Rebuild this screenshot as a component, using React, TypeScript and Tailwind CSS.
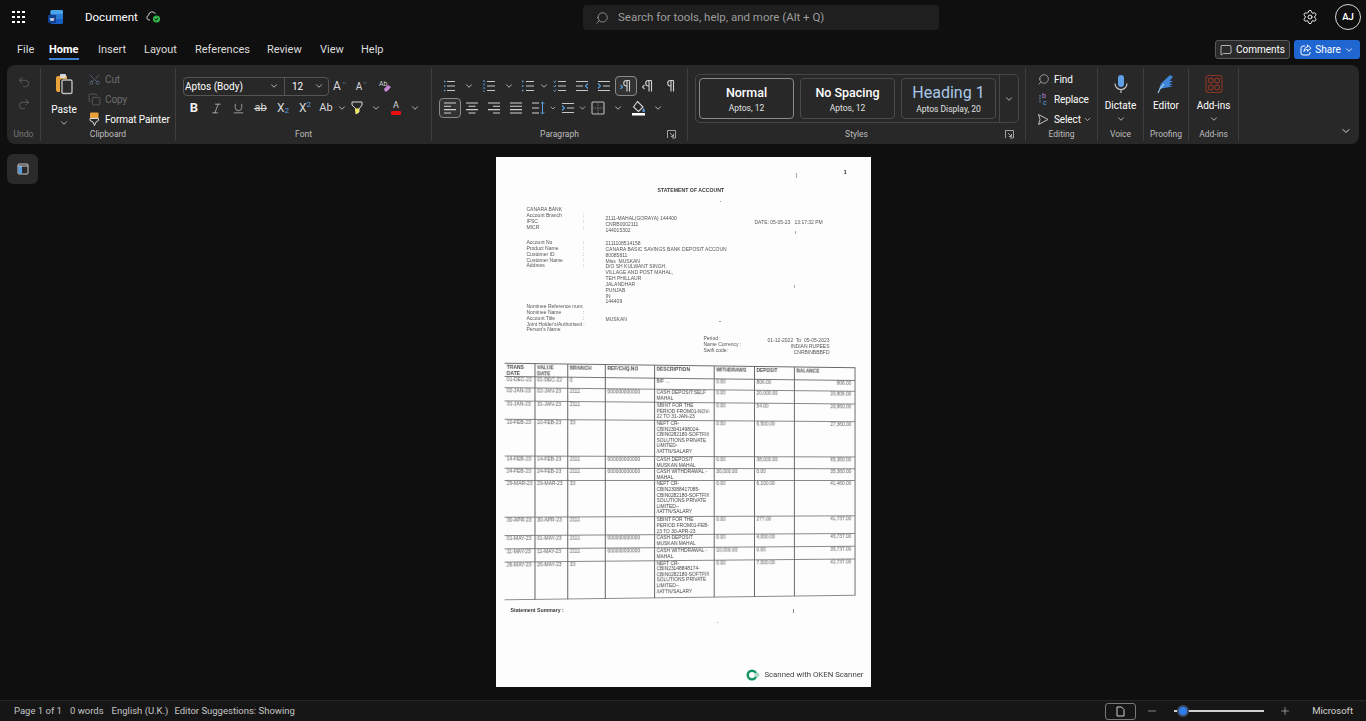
import React, { ReactNode } from 'react';
import {
  Undo2, Redo2, Scissors, Copy, Search, Settings, MessageSquare, ChevronDown, Italic,
  Underline, Plus, Minus,
} from 'lucide-react';

const Chev = ({ className = 'text-[#d0d0d0]' }: { className?: string }) => <ChevronDown size={10} strokeWidth={2} className={className} />;

// --- hand drawn ribbon icons ---
const ListIcon = ({ kind }: { kind: 'bullet' | 'number' | 'multi' | 'check' }) => (
  <svg width="16" height="16" viewBox="0 0 16 16" fill="none">
    {kind === 'number' && <path d="M3 2v12" stroke="#4f93d6" strokeWidth="1.2" strokeDasharray="2 1.5" />}
    {kind === 'bullet' && <path d="M3 3.5h1.4M3 8h1.4M3 12.5h1.4" stroke="#6aa5de" strokeWidth="1.5" />}
    {kind === 'multi' && <path d="M2 3.5h1.4M2 8h1.4M2 12.5h1.4" stroke="#6aa5de" strokeWidth="1.5" />}
    {kind === 'check' && <path d="M1.5 3.5l1 1 1.5-2M1.5 8l1 1 1.5-2M1.5 12.5l1 1 1.5-2" stroke="#6aa5de" strokeWidth="1" />}
    <path d="M6 3.5h8M6 8h8M6 12.5h8" stroke="#c8c8c8" strokeWidth="1.1" />
  </svg>
);

const IndentIcon = ({ dir }: { dir: 'in' | 'out' }) => (
  <svg width="16" height="16" viewBox="0 0 16 16" fill="none">
    <path d={dir === 'out' ? 'M2 3.5h12M2 12.5h12M2 8h7' : 'M2 3.5h12M2 12.5h12M7 8h7'} stroke="#c8c8c8" strokeWidth="1.1" />
    <path d={dir === 'out' ? 'M14 5.5L11.5 8l2.5 2.5' : 'M2 5.5L4.5 8 2 10.5'} stroke="#5aa0e0" strokeWidth="1.1" />
  </svg>
);

const Pilcrow = ({ arrow }: { arrow?: 'l' | 'r' }) => (
  <svg width="16" height="16" viewBox="0 0 16 16" fill="none">
    <path d="M11.5 2.5v11M9 2.5v11M11.5 2.5H8.5a2.5 2.5 0 000 5.5H9" stroke="#d4d4d4" strokeWidth="1.1" />
    {arrow === 'r' && <path d="M2.5 7l2 2-2 2" stroke="#5aa0e0" strokeWidth="1.1" />}
    {arrow === 'l' && <path d="M4.5 7l-2 2 2 2" stroke="#c8c8c8" strokeWidth="1.1" />}
  </svg>
);

const Align = ({ d }: { d: string }) => (
  <svg width="16" height="16" viewBox="0 0 16 16" fill="none"><path d={d} stroke="#cfcfcf" strokeWidth="1.1" /></svg>
);

const Launcher = () => (
  <svg width="9" height="9" viewBox="0 0 9 9" fill="none" className="absolute right-[11px] top-[2px]">
    <path d="M.5 8V.5H8.5V8H5" stroke="#b0b0b0" strokeWidth=".9" />
    <path d="M3 3l3.5 3.5M6.5 3.8v2.7H3.8" stroke="#b0b0b0" strokeWidth=".9" />
  </svg>
);

const Cell = ({ className, children }: { className: string; children?: ReactNode }) => (
  <div className={`h-[20px] flex items-center justify-center shrink-0 ${className}`}>{children}</div>
);

const Group = ({ label, className, children, launcher, dim }: { label: string; className: string; children: ReactNode; launcher?: boolean; dim?: boolean }) => (
  <div className={`my-[3px] flex flex-col border-r border-[#3e3e3e] shrink-0 ${className}`}>
    <div className="h-[60px]">{children}</div>
    <div className={`relative h-[13px] text-center text-[8.5px] leading-[13px] ${dim ? 'text-[#777777]' : 'text-[#bdbdbd]'}`}>
      {label}
      {launcher && <Launcher />}
    </div>
  </div>
);

const StyleBox = ({ name, sub, active, heading }: { name: string; sub: string; active?: boolean; heading?: boolean }) => (
  <div className={`w-[95px] h-[41px] rounded-[4px] border flex flex-col items-center justify-center ${active ? 'border-[#8a8a8a]' : 'border-[#4a4a4a]'}`}>
    <div className={heading ? 'text-[16px] leading-[20px] text-[#a9c9ea]' : 'text-[12.5px] leading-[18px] text-white font-medium'}>{name}</div>
    <div className="text-[8.5px] leading-[12px] text-[#e0e0e0]">{sub}</div>
  </div>
);

const SmallRow = ({ icon, text, dim, chev }: { icon: ReactNode; text: string; dim?: boolean; chev?: boolean }) => (
  <div className={`h-[20px] flex items-center text-[10px] tracking-[-0.1px] ${dim ? 'text-[#6e6e6e]' : 'text-white'}`}>
    <div className="w-[14px] flex justify-center shrink-0">{icon}</div>
    <span className="ml-[4px] whitespace-nowrap">{text}</span>
    {chev && <ChevronDown size={9} className="ml-[2px] text-[#d0d0d0]" />}
  </div>
);

// --- scanned page data ---
type Row = { d: string; b: string; r?: string; desc: string[]; w: string; dep: string; bal: string; h: string };
const rows: Row[] = [
  { d: '01-DEC-22', b: '0', desc: ['B/F ...'], w: '0.00', dep: '806.00', bal: '806.00', h: 'h-[11px]' },
  { d: '02-JAN-23', b: '2111', r: '000000000000', desc: ['CASH DEPOSIT:SELF', 'MAHAL'], w: '0.00', dep: '20,000.00', bal: '20,806.00', h: 'h-[13px]' },
  { d: '31-JAN-23', b: '2111', desc: ['SBINT FOR THE', 'PERIOD FROM01-NOV-', '22 TO 31-JAN-23'], w: '0.00', dep: '54.00', bal: '20,860.00', h: 'h-[18px]' },
  { d: '10-FEB-23', b: '33', desc: ['NEFT CR-', 'CBIN23041498024-', 'CBIN0282180-SOFTFIX', 'SOLUTIONS PRIVATE', 'LIMITED-', '/IATTN/SALARY'], w: '0.00', dep: '6,500.00', bal: '27,360.00', h: 'h-[36px]' },
  { d: '14-FEB-23', b: '2111', r: '000000000000', desc: ['CASH DEPOSIT', 'MUSKAN MAHAL'], w: '0.00', dep: '38,000.00', bal: '65,360.00', h: 'h-[12px]' },
  { d: '24-FEB-23', b: '2111', r: '000000000000', desc: ['CASH WITHDRAWAL -', 'MAHAL'], w: '30,000.00', dep: '0.00', bal: '35,360.00', h: 'h-[12px]' },
  { d: '29-MAR-23', b: '33', desc: ['NEFT CR-', 'CBIN23088417085-', 'CBIN0282180-SOFTFIX', 'SOLUTIONS PRIVATE', 'LIMITED--', '/IATTN/SALARY'], w: '0.00', dep: '6,100.00', bal: '41,460.00', h: 'h-[36px]' },
  { d: '30-APR-23', b: '2111', desc: ['SBINT FOR THE', 'PERIOD FROM01-FEB-', '23 TO 30-APR-23'], w: '0.00', dep: '277.00', bal: '41,737.00', h: 'h-[18px]' },
  { d: '01-MAY-23', b: '2111', r: '000000000000', desc: ['CASH DEPOSIT', 'MUSKAN MAHAL'], w: '0.00', dep: '4,000.00', bal: '45,737.00', h: 'h-[13px]' },
  { d: '11-MAY-23', b: '2111', r: '000000000000', desc: ['CASH WITHDRAWAL -', 'MAHAL'], w: '10,000.00', dep: '0.00', bal: '35,737.00', h: 'h-[12px]' },
  { d: '26-MAY-23', b: '33', desc: ['NEFT CR-', 'CBIN23148848174-', 'CBIN0282180-SOFTFIX', 'SOLUTIONS PRIVATE', 'LIMITED--', '/IATTN/SALARY'], w: '0.00', dep: '7,000.00', bal: '42,737.00', h: 'h-[37px]' },
];

const Lines = ({ className, items }: { className: string; items: string[] }) => (
  <div className={`absolute whitespace-pre text-[5px] leading-[5.85px] text-[#555555] ${className}`}>
    {items.map((t, i) => <div key={i}>{t || '\u00a0'}</div>)}
  </div>
);

const headCell = 'border-r border-[#666666] align-top pl-[2px] pt-[1px] leading-[5.5px] font-bold text-left text-[#4a4a4a]';
const bodyCell = 'border-r border-[#666666] align-top pl-[2px] whitespace-nowrap overflow-hidden';

const ScanPage = () => (
  <div className="relative w-[375px] h-[530px] bg-[#fdfdfd] overflow-hidden font-['Liberation_Sans',sans-serif]">
    <div className="absolute inset-0 blur-[0.35px]">
      <div className="absolute left-[348px] top-[11px] text-[6px] font-bold text-[#333333]">1</div>
      <div className="absolute left-[162px] top-[30px] text-[5.2px] font-bold text-[#3a3a3a] whitespace-nowrap">STATEMENT OF ACCOUNT</div>
      <Lines className="left-[31px] top-[50px]" items={['CANARA BANK', 'Account Branch', 'IFSC', 'MICR']} />
      <Lines className="left-[87px] top-[56px]" items={[':', ':', ':']} />
      <Lines className="left-[110px] top-[59px]" items={['2111-MAHAL(GORAYA) 144400', 'CNRB0002111', '144015302']} />
      <div className="absolute left-[259px] top-[62px] text-[5px] text-[#555555] whitespace-pre">DATE: 05-05-23   13:17:32 PM</div>
      <Lines className="left-[31px] top-[83px]" items={['Account No', 'Product Name', 'Customer ID', 'Customer Name', 'Address']} />
      <Lines className="left-[87px] top-[83px]" items={[':', ':', ':', ':', ':']} />
      <Lines className="left-[110px] top-[84px]" items={['2111108514158', 'CANARA BASIC SAVINGS BANK DEPOSIT ACCOUN', '80085811', 'Miss  MUSKAN', 'D/O SH KULWANT SINGH,', 'VILLAGE AND POST MAHAL,', 'TEH PHILLAUR', 'JALANDHAR', 'PUNJAB', 'IN', '144409']} />
      <Lines className="left-[31px] top-[147px]" items={['Nominee Reference num:', 'Nominee Name', 'Account Title', "Joint Holder's/Authorised :", "Person's Name"]} />
      <Lines className="left-[87px] top-[153px]" items={[':', ':']} />
      <Lines className="left-[110px] top-[160px]" items={['MUSKAN']} />
      <Lines className="left-[208px] top-[179px]" items={['Period :', 'Name Currency :', 'Swift code:']} />
      <Lines className="right-[41px] top-[181px] text-right" items={['01-12-2022  To  05-05-2023', 'INDIAN RUPEES', 'CNRBINBBBFD']} />

      {/* specks from the scanner */}
      <div className="absolute left-[300px] top-[16px] w-px h-[5px] bg-[#aaaaaa]" />
      <div className="absolute left-[299px] top-[74px] w-px h-[3px] bg-[#aaaaaa]" />
      <div className="absolute left-[224px] top-[44px] w-px h-px bg-[#999999]" />
      <div className="absolute left-[298px] top-[128px] w-px h-[3px] bg-[#aaaaaa]" />
      <div className="absolute left-[223px] top-[164px] w-[2px] h-px bg-[#999999]" />
      <div className="absolute left-[297px] top-[452px] w-px h-[4px] bg-[#888888]" />
      <div className="absolute left-[221px] top-[465px] w-px h-px bg-[#aaaaaa]" />

      <table className="absolute left-[11px] top-[208px] w-[352px] table-fixed border-collapse text-[4.9px] leading-[5.6px] text-[#5c5c5c] border-t border-b border-[#666666] [transform:perspective(1000px)_rotateY(6.4deg)]">
        <colgroup>
          <col className="w-[29px]" /><col className="w-[32px]" /><col className="w-[37px]" /><col className="w-[49px]" />
          <col className="w-[60px]" /><col className="w-[41px]" /><col className="w-[41px]" /><col className="w-[63px]" />
        </colgroup>
        <thead>
          <tr className="h-[13px] border-b border-[#777777]">
            <th className={headCell}>TRANS<br />DATE</th>
            <th className={headCell}>VALUE<br />DATE</th>
            <th className={headCell}>BRANCH</th>
            <th className={headCell}>REF/CHQ.NO</th>
            <th className={headCell}>DESCRIPTION</th>
            <th className={headCell}>WITHDRAWS</th>
            <th className={headCell}>DEPOSIT</th>
            <th className={headCell}>BALANCE</th>
          </tr>
        </thead>
        <tbody>
          {rows.map(r => (
            <tr key={r.d} className={`${r.h} border-b border-[#888888]`}>
              <td className={bodyCell}>{r.d}</td>
              <td className={bodyCell}>{r.d}</td>
              <td className={bodyCell}>{r.b}</td>
              <td className={bodyCell}>{r.r}</td>
              <td className={`${bodyCell} text-[#3f3f3f]`}>{r.desc.map(l => <div key={l}>{l}</div>)}</td>
              <td className={bodyCell}>{r.w}</td>
              <td className={bodyCell}>{r.dep}</td>
              <td className={`${bodyCell} text-right pr-[3px]`}>{r.bal}</td>
            </tr>
          ))}
        </tbody>
      </table>

      <div className="absolute left-[15px] top-[450px] text-[5.2px] font-bold text-[#3a3a3a] whitespace-nowrap">Statement Summary :</div>
    </div>
    <div className="absolute right-[7px] bottom-[6px] flex items-center gap-[4px]">
      <svg width="14" height="12" viewBox="0 0 14 12" fill="none">
        <circle cx="6" cy="6" r="4.3" stroke="#12955f" strokeWidth="2.4" />
        <circle cx="11" cy="6" r="2.4" fill="#a8d8bf" />
      </svg>
      <span className="font-['Roboto',sans-serif] text-[7.8px] text-[#444444] whitespace-nowrap">Scanned with OKEN Scanner</span>
    </div>
  </div>
);

export default function App() {
  return (
    <div className="w-[1366px] h-[721px] flex flex-col bg-[#0f0f0f] overflow-hidden font-['Roboto',sans-serif] text-white">
      {/* title bar */}
      <div className="h-[34px] shrink-0 flex items-center relative">
        <div className="ml-[12px] w-[13px] h-[13px] grid grid-cols-3 gap-[2.5px]">
          {[...Array(9)].map((_, i) => <div key={i} className="w-[2.6px] h-[2.6px] bg-white" />)}
        </div>
        <svg width="16" height="16" viewBox="0 0 16 16" className="ml-[23px]">
          <rect x="2.5" y="1" width="12.5" height="14" rx="1.5" fill="#1a5fc4" />
          <rect x="2.5" y="1" width="12.5" height="4.5" rx="1.5" fill="#4aa4ee" />
          <rect x="2.5" y="5.5" width="12.5" height="4.5" fill="#2b7cd3" />
          <rect x="0" y="6" width="8" height="8" rx="1" fill="#123f8f" />
          <text x="4" y="12.2" textAnchor="middle" fontSize="6" fontWeight="700" fill="#ffffff">w</text>
        </svg>
        <span className="ml-[21px] mt-px text-[11.5px] leading-none">Document</span>
        <svg width="15" height="14" viewBox="0 0 15 14" fill="none" className="ml-[8px]">
          <path d="M4 10H3a2.4 2.4 0 01-.4-4.7A3.6 3.6 0 019.5 4" stroke="#d0d0d0" strokeWidth="1" />
          <circle cx="10.5" cy="9" r="3.6" fill="#2fb344" />
          <path d="M8.8 9l1.2 1.2 2-2.2" stroke="#0f0f0f" strokeWidth="1" />
        </svg>
        <div className="absolute left-[583px] top-[5px] w-[356px] h-[25px] rounded-[4px] bg-[#1f1f1f] flex items-center">
          <Search size={14} strokeWidth={1.2} className="ml-[12px] text-[#b5b5b5] -scale-x-100" />
          <span className="ml-[9px] text-[11.5px] text-[#9c9c9c]">Search for tools, help, and more (Alt + Q)</span>
        </div>
        <Settings size={16} strokeWidth={1.5} className="absolute left-[1302px] top-[9px] text-[#f0f0f0]" />
        <div className="absolute left-[1335px] top-[4px] w-[26px] h-[26px] rounded-full border border-[#d8d8d8] flex items-center justify-center text-[9.5px] font-semibold">AJ</div>
      </div>

      {/* tabs */}
      <div className="h-[31px] shrink-0 flex items-center relative pt-[2px] text-[11px] text-[#dddddd]">
        <span className="absolute left-[17px]">File</span>
        <span className="absolute left-[49px] font-bold text-white">Home</span>
        <div className="absolute left-[49px] top-[24px] w-[30px] h-[2px] bg-[#3b82d6]" />
        <span className="absolute left-[98px]">Insert</span>
        <span className="absolute left-[144px]">Layout</span>
        <span className="absolute left-[195px]">References</span>
        <span className="absolute left-[267px]">Review</span>
        <span className="absolute left-[320px]">View</span>
        <span className="absolute left-[361px]">Help</span>
        <div className="absolute left-[1215px] top-[6px] w-[75px] h-[19px] rounded-[3px] border border-[#5a5a5a] bg-[#2a2a2a] flex items-center justify-center gap-[4px] text-[10px] text-white">
          <MessageSquare size={12} strokeWidth={1.3} />Comments
        </div>
        <div className="absolute left-[1294px] top-[6px] w-[66px] h-[19px] rounded-[3px] bg-[#1f66d1] flex items-center justify-center gap-[3px] text-[10px] text-white">
          <svg width="12" height="12" viewBox="0 0 12 12" fill="none" stroke="#ffffff" strokeWidth="1">
            <path d="M5 2H3a2 2 0 00-2 2v5a2 2 0 002 2h5a2 2 0 002-2V8" />
            <path d="M7.5 1L11 4.2 7.5 7.2V5.4C6 5.4 4.6 6 4 7.5 4 5 5.5 3 7.5 3z" />
          </svg>
          Share<ChevronDown size={10} />
        </div>
      </div>

      {/* ribbon */}
      <div className="mx-[7px] h-[79px] shrink-0 rounded-[8px] bg-[#282828] flex relative">
        <Group label="Undo" dim className="w-[34px]">
          <div className="flex flex-col items-center pt-[7px] gap-[8px] text-[#6f6f6f]">
            <Undo2 size={14} strokeWidth={1.2} />
            <Redo2 size={14} strokeWidth={1.2} />
          </div>
        </Group>

        <Group label="Clipboard" className="w-[135px]">
          <div className="flex">
            <div className="w-[46px] shrink-0 flex flex-col items-center pt-[5px]">
              <svg width="22" height="22" viewBox="0 0 22 22" fill="none">
                <path d="M5 3h9v3H9a2 2 0 00-2 2v11H5a2 2 0 01-2-2V5a2 2 0 012-2z" fill="#e8a33d" />
                <rect x="7" y="1" width="6" height="4" rx="1" fill="#d8d8d8" />
                <rect x="9" y="7" width="10" height="13.5" rx="1.5" stroke="#bbbbbb" strokeWidth="1.4" fill="#2a2a2a" />
              </svg>
              <div className="text-[10px] leading-[14px] mt-[8px]">Paste</div>
              <Chev className="text-[#d0d0d0] mt-[1px]" />
            </div>
            <div className="pt-[1px]">
              <SmallRow dim text="Cut" icon={<Scissors size={13} strokeWidth={1.1} className="text-[#6c7f98] -rotate-90" />} />
              <SmallRow dim text="Copy" icon={<Copy size={13} strokeWidth={1.2} className="text-[#707070]" />} />
              <SmallRow text="Format Painter" icon={
                <svg width="11" height="14" viewBox="0 0 11 14" fill="none">
                  <rect x="1" y="0.5" width="8.5" height="6" rx="1" fill="#eba23d" />
                  <path d="M1 6.5h8.5v2L7 10l-1.5 3.5L4 10 1 8.5z" stroke="#d8d8d8" strokeWidth="1" />
                </svg>} />
            </div>
          </div>
        </Group>

        <Group label="Font" className="w-[256px]">
          <div className="pl-[7px] pt-[8px] flex flex-col gap-[2px]">
            <div className="h-[20px] flex items-center">
              <div className="w-[146px] h-[19px] rounded-[4px] border border-[#555555] flex items-center text-[10px] shrink-0">
                <div className="w-[101px] h-full flex items-center justify-between pl-[1px] pr-[5px] border-r border-[#555555]">
                  <span>Aptos (Body)</span><Chev />
                </div>
                <div className="flex-1 flex items-center justify-between pl-[7px] pr-[4px]"><span>12</span><Chev /></div>
              </div>
              <Cell className="w-[24px] ml-[-1px] text-[12px] text-[#d8d8d8]">A<ChevronDown size={6} className="text-[#5aa0e0] rotate-180 -mt-[6px]" /></Cell>
              <Cell className="w-[20px] text-[10px] text-[#d8d8d8]">A<ChevronDown size={6} className="text-[#5aa0e0] -mt-[6px]" /></Cell>
              <Cell className="w-[25px]">
                <svg width="14" height="14" viewBox="0 0 14 14" fill="none">
                  <text x="1" y="7" fontSize="7" fill="#cfcfcf">Ab</text>
                  <path d="M6 10l4-4 3 2-4 4.5H7z" fill="#c987d9" />
                </svg>
              </Cell>
            </div>
            <div className="h-[20px] flex items-center text-[#d8d8d8]">
              <Cell className="w-[22px] text-[13px] font-bold text-[#efefef]">B</Cell>
              <Cell className="w-[22px]"><Italic size={13} strokeWidth={1.2} /></Cell>
              <Cell className="w-[22px]"><Underline size={13} strokeWidth={1.2} /></Cell>
              <Cell className="w-[23px] relative text-[11px]">ab<div className="absolute left-[5px] right-[5px] top-[10px] h-px bg-[#d8d8d8]" /></Cell>
              <Cell className="w-[22px] text-[12px]">X<span className="text-[8px] text-[#5aa0e0] mt-[6px]">2</span></Cell>
              <Cell className="w-[22px] text-[12px]">X<span className="text-[8px] text-[#5aa0e0] -mt-[6px]">2</span></Cell>
              <Cell className="w-[20px] text-[11px]">Ab</Cell>
              <Cell className="w-[11px]"><Chev /></Cell>
              <Cell className="w-[19px]">
                <svg width="12" height="14" viewBox="0 0 12 14" fill="none">
                  <path d="M1 1h10v3L8 8v3l-3 2V8L1 4z" stroke="#d8d8d8" strokeWidth="1" />
                  <path d="M4 7.5h4V11l-3 2z" fill="#f5ea5a" />
                </svg>
              </Cell>
              <Cell className="w-[20px]"><Chev /></Cell>
              <Cell className="w-[20px]">
                <div className="flex flex-col items-center">
                  <span className="text-[9px] leading-[9px]">A</span>
                  <div className="w-[10px] h-[4px] bg-[#e81010] rounded-[1px] mt-[1px]" />
                </div>
              </Cell>
              <Cell className="w-[18px]"><Chev /></Cell>
            </div>
          </div>
        </Group>

        <Group label="Paragraph" launcher className="w-[256px]">
          <div className="pl-[7px] pt-[8px] flex flex-col gap-[2px]">
            <div className="h-[20px] flex items-center">
              <Cell className="w-[20px]"><ListIcon kind="bullet" /></Cell>
              <Cell className="w-[19px]"><Chev /></Cell>
              <Cell className="w-[21px]"><ListIcon kind="number" /></Cell>
              <Cell className="w-[19px]"><Chev /></Cell>
              <Cell className="w-[20px]"><ListIcon kind="multi" /></Cell>
              <Cell className="w-[11px]"><Chev /></Cell>
              <Cell className="w-[21px]"><ListIcon kind="check" /></Cell>
              <Cell className="w-[23px]"><IndentIcon dir="out" /></Cell>
              <Cell className="w-[22px]"><IndentIcon dir="in" /></Cell>
              <Cell className="w-[22px] rounded-[4px] border border-[#8a8a8a] bg-[#333333]"><Pilcrow arrow="r" /></Cell>
              <Cell className="w-[22px]"><Pilcrow arrow="l" /></Cell>
              <Cell className="w-[22px]"><Pilcrow /></Cell>
            </div>
            <div className="h-[20px] flex items-center">
              <Cell className="w-[22px] rounded-[4px] border border-[#8a8a8a] bg-[#333333]"><Align d="M2 3h12M2 6.3h7M2 9.6h12M2 13h7" /></Cell>
              <Cell className="w-[22px]"><Align d="M2 3h12M4.5 6.3h7M2 9.6h12M4.5 13h7" /></Cell>
              <Cell className="w-[22px]"><Align d="M2 3h12M7 6.3h7M2 9.6h12M7 13h7" /></Cell>
              <Cell className="w-[22px]"><Align d="M2 3h12M2 6.3h12M2 9.6h12M2 13h12" /></Cell>
              <Cell className="w-[22px]">
                <svg width="16" height="16" viewBox="0 0 16 16" fill="none">
                  <path d="M2 3h7M2 8h7M2 13h7" stroke="#cfcfcf" strokeWidth="1.1" />
                  <path d="M12.5 2v12M10.8 3.7l1.7-1.7 1.7 1.7M10.8 12.3l1.7 1.7 1.7-1.7" stroke="#5aa0e0" strokeWidth="1" />
                </svg>
              </Cell>
              <Cell className="w-[8px]"><Chev /></Cell>
              <Cell className="w-[21px]"><IndentIcon dir="in" /></Cell>
              <Cell className="w-[9px]"><Chev /></Cell>
              <Cell className="w-[22px]">
                <svg width="14" height="14" viewBox="0 0 14 14" fill="none">
                  <rect x="1" y="1" width="12" height="12" rx="1" stroke="#bdbdbd" strokeWidth="1.1" />
                  <path d="M7 1v12M1 7h12" stroke="#777777" strokeWidth="1" strokeDasharray="1.5 1" />
                </svg>
              </Cell>
              <Cell className="w-[18px]"><Chev /></Cell>
              <Cell className="w-[22px]">
                <svg width="15" height="16" viewBox="0 0 15 16" fill="none">
                  <path d="M6.5 1.5l5.5 5.5-4.5 4.5L2.5 7z" stroke="#d8d8d8" strokeWidth="1.1" />
                  <path d="M12.5 8c1 1.2 1.5 2 1.5 2.7a1.3 1.3 0 01-2.6 0c0-.7.5-1.5 1.1-2.7z" fill="#5aa0e0" />
                  <rect x="1" y="13" width="13" height="2.5" fill="#ffffff" />
                </svg>
              </Cell>
              <Cell className="w-[18px]"><Chev /></Cell>
            </div>
          </div>
        </Group>

        <Group label="Styles" launcher className="w-[338px]">
          <div className="pl-[7px] pt-[6px]">
            <div className="w-[324px] h-[49px] rounded-[5px] border border-[#464646] flex items-center pl-[3px]">
              <div className="flex gap-[6px]">
                <StyleBox active name="Normal" sub="Aptos, 12" />
                <StyleBox name="No Spacing" sub="Aptos, 12" />
                <StyleBox heading name="Heading 1" sub="Aptos Display, 20" />
              </div>
              <div className="ml-[3px] flex-1 h-full border-l border-[#464646] flex items-center justify-center"><Chev /></div>
            </div>
          </div>
        </Group>

        <Group label="Editing" className="w-[72px]">
          <div className="pl-[10px] pt-[1px]">
            <SmallRow text="Find" icon={<Search size={13} strokeWidth={1.2} className="text-[#c8c8c8] -scale-x-100" />} />
            <SmallRow text="Replace" icon={
              <svg width="14" height="14" viewBox="0 0 14 14" fill="none">
                <text x="6" y="6" fontSize="7" fill="#b58bd8">b</text>
                <text x="7" y="13" fontSize="7" fill="#5aa0e0">c</text>
                <path d="M4 3v8" stroke="#7c9cc0" strokeWidth="1" strokeDasharray="1.5 1" />
              </svg>} />
            <SmallRow chev text="Select" icon={
              <svg width="12" height="13" viewBox="0 0 12 13" fill="none"><path d="M1.5 1.5L11 6.5 1.5 11.5l1.5-5z" stroke="#c0c0c0" strokeWidth="1" /></svg>} />
          </div>
        </Group>

        <Group label="Voice" className="w-[46px]">
          <div className="flex flex-col items-center pt-[6px]">
            <svg width="20" height="20" viewBox="0 0 20 20" fill="none">
              <rect x="7" y="1" width="6" height="12" rx="3" fill="#5e9fe6" />
              <path d="M4 9.5a6 6 0 0012 0M10 15.5V19" stroke="#cfcfcf" strokeWidth="1.1" />
            </svg>
            <div className="text-[10px] leading-[14px] mt-[5px]">Dictate</div>
            <Chev className="text-[#d0d0d0] mt-[1px]" />
          </div>
        </Group>

        <Group label="Proofing" className="w-[45px]">
          <div className="flex flex-col items-center pt-[6px]">
            <svg width="20" height="20" viewBox="0 0 20 20" fill="none">
              <path d="M14 1L5 9.5 3 15l5-1 9-1.5-4-.5 4-2-4-.5 4-2.5-3.5-.3L17 3z" fill="#3f86d8" />
              <path d="M2 19c1-3 3-6 6-9" stroke="#9cc6f0" strokeWidth="1.1" />
            </svg>
            <div className="text-[10px] leading-[14px] mt-[5px]">Editor</div>
          </div>
        </Group>

        <Group label="Add-ins" className="w-[50px]">
          <div className="flex flex-col items-center pt-[6px]">
            <svg width="20" height="20" viewBox="0 0 20 20" fill="none" stroke="#8a3524" strokeWidth="1.1">
              <rect x="2" y="1.5" width="16" height="17" rx="3" />
              <circle cx="6.8" cy="6.5" r="2.4" /><circle cx="13.2" cy="6.5" r="2.4" />
              <circle cx="6.8" cy="13.5" r="2.4" /><circle cx="13.2" cy="13.5" r="2.4" />
            </svg>
            <div className="text-[10px] leading-[14px] mt-[5px]">Add-ins</div>
            <Chev className="text-[#d0d0d0] mt-[1px]" />
          </div>
        </Group>

        <ChevronDown size={12} className="absolute right-[7px] bottom-[7px] text-[#d8d8d8]" />
      </div>

      {/* document area */}
      <div className="flex-1 relative pt-[13px] flex justify-center">
        <div className="absolute left-[7px] top-[10px] w-[31px] h-[30px] rounded-[6px] bg-[#2a2a2a] flex items-center justify-center">
          <svg width="12" height="12" viewBox="0 0 12 12" fill="none">
            <rect x="1" y="1" width="10" height="10" rx="1" stroke="#c8c8c8" strokeWidth="1" />
            <rect x="1.5" y="3" width="3.5" height="7.5" fill="#5a9fe6" />
            <path d="M1 3h10" stroke="#c8c8c8" strokeWidth="1" />
          </svg>
        </div>
        <ScanPage />
      </div>

      {/* status bar */}
      <div className="h-[21px] shrink-0 relative border-t border-[#262626] bg-[#161616] text-[9.5px] text-[#c4c4c4] flex items-center">
        <span className="ml-[14px]">Page 1 of 1</span>
        <span className="ml-[8px]">0 words</span>
        <span className="ml-[8px]">English (U.K.)</span>
        <span className="ml-[6px]">Editor Suggestions: Showing</span>
        <div className="ml-auto flex items-center text-[#d0d0d0]">
          <div className="w-[31px] h-[17px] rounded-[3px] border border-[#777777] flex items-center justify-center">
            <svg width="9" height="11" viewBox="0 0 9 11" fill="none"><path d="M1 1h4.5L8 3.5V10H1z" stroke="#cfcfcf" strokeWidth="1" /></svg>
          </div>
          <Minus size={12} strokeWidth={1.2} className="ml-[10px]" />
          <div className="ml-[16px] w-[90px] h-[2px] bg-[#d0d0d0] relative">
            <div className="absolute left-[3px] -top-[5px] w-[12px] h-[12px] rounded-full bg-[#2f7de8] border-2 border-[#3b4a63]" />
          </div>
          <Plus size={12} strokeWidth={1.2} className="ml-[15px]" />
          <span className="ml-[21px] mr-[13px]">Microsoft</span>
        </div>
      </div>
    </div>
  );
}
